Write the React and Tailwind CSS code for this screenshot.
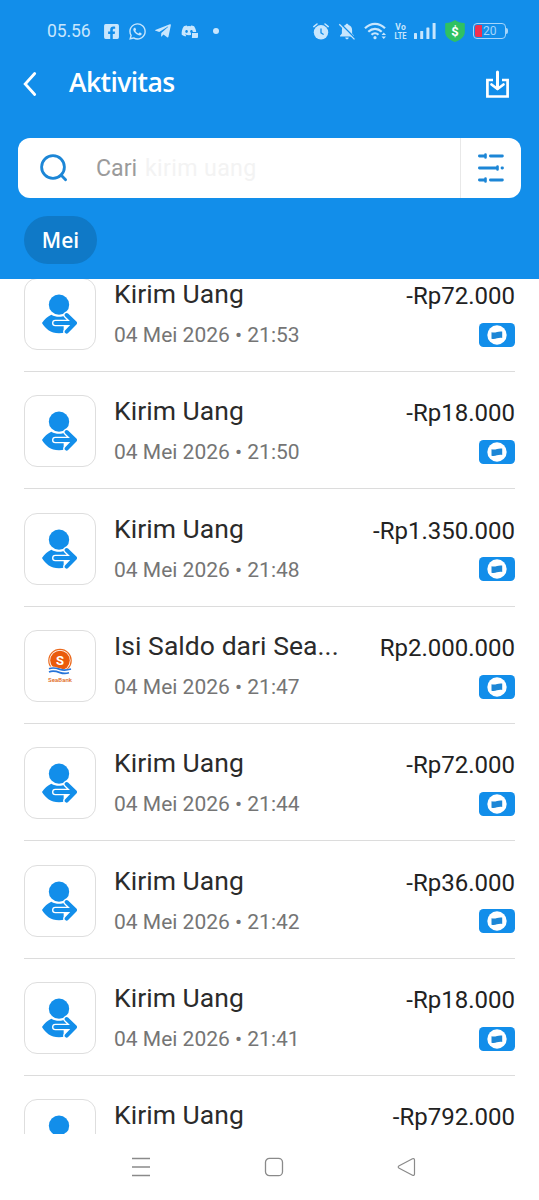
import { FaFacebookSquare, FaTelegramPlane, FaWhatsapp, FaDiscord } from 'react-icons/fa'

const transactions = [
  { id: 1, title: 'Kirim Uang', date: '04 Mei 2026 • 21:53', amount: '-Rp72.000' },
  { id: 2, title: 'Kirim Uang', date: '04 Mei 2026 • 21:50', amount: '-Rp18.000' },
  { id: 3, title: 'Kirim Uang', date: '04 Mei 2026 • 21:48', amount: '-Rp1.350.000' },
  { id: 4, title: 'Isi Saldo dari Sea...', date: '04 Mei 2026 • 21:47', amount: 'Rp2.000.000', bank: true },
  { id: 5, title: 'Kirim Uang', date: '04 Mei 2026 • 21:44', amount: '-Rp72.000' },
  { id: 6, title: 'Kirim Uang', date: '04 Mei 2026 • 21:42', amount: '-Rp36.000' },
  { id: 7, title: 'Kirim Uang', date: '04 Mei 2026 • 21:41', amount: '-Rp18.000' },
  { id: 8, title: 'Kirim Uang', amount: '-Rp792.000' },
]

function StatusBar() {
  return (
    <div className="flex h-[62px] items-center pl-[47px] pr-[31px] text-[#c8e6fd]">
      <span className="mt-px w-[57px] text-[17.5px] leading-none tracking-[-0.1px]">05.56</span>
      <FaFacebookSquare className="-ml-px size-[17px]" />
      <FaWhatsapp className="ml-[8px] size-[19px]" />
      <FaTelegramPlane className="ml-[7px] size-[18px]" />
      <div className="relative ml-[9px] h-[14px] w-[16px]">
        <FaDiscord className="-mt-px size-[16px]" />
        <span className="absolute -right-px bottom-0 h-[6px] w-[7px] rounded-[1px] border-l border-t border-[#128eea] bg-[#c8e6fd]" />
      </div>
      <span className="ml-[16px] size-[6px] rounded-full bg-[#c8e6fd]" />

      <div className="ml-auto flex items-center">
        {/* alarm */}
        <svg className="h-[17px] w-[16px]" viewBox="0 0 16 17" fill="none">
          <circle cx="8" cy="9.3" r="7.2" fill="currentColor" />
          <path d="M.8 3.6 4 1M15.2 3.6 12 1" stroke="currentColor" strokeWidth="1.5" strokeLinecap="round" />
          <path d="M8 6v3.8l2.2 1.4" stroke="#128eea" strokeWidth="1.3" strokeLinecap="round" />
        </svg>
        {/* muted bell */}
        <svg className="ml-[9px] h-[17px] w-[18px]" viewBox="0 0 18 17">
          <path d="M9 .8c.9 0 1.4.6 1.5 1.3 2.3.7 3.6 2.6 3.6 4.9v3.6l1.9 2.2v.7H2v-.7l1.9-2.2V7c0-2.3 1.3-4.2 3.6-4.9C7.6 1.4 8.1.8 9 .8ZM7.2 14.5h3.6c-.2 1.2-.9 1.8-1.8 1.8s-1.6-.6-1.8-1.8Z" fill="currentColor" />
          <path d="M2.6.8 17.4 15.6" stroke="#128eea" strokeWidth="1.6" />
          <path d="M1.3 1.2 16.5 16.4" stroke="currentColor" strokeWidth="1.3" />
        </svg>
        {/* wifi */}
        <svg className="ml-[8px] h-[18px] w-[23px]" viewBox="0 0 23 18" fill="none" stroke="currentColor" strokeWidth="2.2">
          <path d="M1 6.3C7 .3 15 .3 21 6.3" />
          <path d="M4.3 9.7c4-3.8 9.4-3.8 13.4 0" />
          <path d="M7.5 12.8c2-2 5-2 7 0" />
          <circle cx="11" cy="15.7" r="1.6" fill="currentColor" stroke="none" />
          <path d="m17.5 13 2.25-2.5L22 13ZM17.5 14.5h4.5L19.75 17Z" fill="currentColor" stroke="none" />
        </svg>
        <svg className="ml-[7px] h-[17px] w-[13px]" viewBox="0 0 13 17" fill="currentColor" fontWeight="700" fontSize="8.5">
          <text x="6.5" y="7.2" textAnchor="middle" textLength="10.5">Vo</text>
          <text x="6.5" y="15.5" textAnchor="middle" textLength="12" lengthAdjust="spacingAndGlyphs">LTE</text>
        </svg>
        {/* signal */}
        <svg className="ml-[7px] h-[16px] w-[22px]" viewBox="0 0 22 16" fill="currentColor">
          <rect x="0" y="10" width="3" height="6" rx=".6" />
          <rect x="6.2" y="8" width="3" height="8" rx=".6" />
          <rect x="12.4" y="4.5" width="3" height="11.5" rx=".6" />
          <rect x="18.6" y="0" width="3" height="16" rx=".6" />
        </svg>
        {/* security shield */}
        <svg className="ml-[9px] h-[22px] w-[20px]" viewBox="0 0 20 22">
          <path d="M10 0c2.6 1.9 5.5 2.9 9 3.1.5 0 .8.4.8.9v8c0 4.8-4.2 8-9.8 10C4.4 20 .2 16.8.2 12V4c0-.5.3-.9.8-.9C4.5 2.9 7.4 1.9 10 0Z" fill="#2fc162" />
          <text x="10" y="15.5" textAnchor="middle" fontSize="13" fontWeight="700" fill="#fff">$</text>
        </svg>
        {/* battery */}
        <div className="ml-[8px] flex items-center">
          <div className="flex h-[16px] w-[33px] items-center rounded-[4px] border border-[#a6d5fa] p-px">
            <span className="h-full w-[7px] rounded-l-[2px] bg-[#f0304f]" />
            <span className="ml-px text-[12px] leading-none text-[#a6d5fa]">20</span>
          </div>
          <span className="h-[6px] w-[2px] rounded-r-sm bg-[#a6d5fa]" />
        </div>
      </div>
    </div>
  )
}

function Header() {
  return (
    <header className="h-[279px] shrink-0 bg-[#128eea]">
      <StatusBar />
      <div className="flex h-[44px] items-center pl-[23px] pr-[29px] text-white">
        <svg className="h-[26px] w-[14px]" viewBox="0 0 14 26" fill="none" stroke="currentColor" strokeWidth="2.8" strokeLinecap="round">
          <path d="M11.7 2.5 2.2 13l9.5 10.5" />
        </svg>
        <h1 className="-mt-[3px] ml-[32px] font-['Open_Sans'] text-[26.5px] font-semibold leading-none tracking-[-0.6px]">Aktivitas</h1>
        <svg className="ml-auto h-[29px] w-[25px]" viewBox="0 0 25 29" fill="none" stroke="currentColor" strokeWidth="2.7">
          <path d="M8 10H2.4v16.500h20.200V10H17" />
          <path d="M12.5 2v16" strokeLinecap="round" strokeWidth="3" />
          <path d="m6.500 14.500 6 4.500 6-4.500" strokeLinecap="round" strokeLinejoin="round" />
        </svg>
      </div>

      <div className="mx-[18px] mt-[32px] flex h-[60px] rounded-[12px] bg-white">
        <div className="flex flex-1 items-center pl-[21px]">
          <svg className="size-[30px]" viewBox="0 0 30 30" fill="none" stroke="#1c86d6" strokeWidth="2.8" strokeLinecap="round">
            <circle cx="14" cy="14" r="11.4" />
            <path d="m22 22 4.600 4.800" />
          </svg>
          <p className="ml-[27px] mt-[2px] whitespace-pre text-[23.2px] leading-none text-[#9b9b9b]">
            Cari <span className="ml-[2px] tracking-[0.35px] text-[#f3f3f3]">kirim uang</span>
          </p>
        </div>
        <div className="flex w-[61px] items-center justify-center border-l border-[#e8e8e8]">
          <svg className="h-[32px] w-[28px]" viewBox="0 0 28 32" fill="none" stroke="#1c86d6" strokeWidth="2.8" strokeLinecap="round">
            <path d="M2.400 4h5M13.400 4h12M2.400 16h17M25 16h.5M2.400 28h5M13.400 28h12" />
            <path d="M8.500 2.500v3M20.500 14.500v3M8.500 26.500v3" strokeWidth="2.600" />
          </svg>
        </div>
      </div>

      <button className="ml-[24px] mt-[18px] flex h-[48px] w-[73px] items-center justify-center rounded-full bg-[#0f79c7] pt-px font-['Open_Sans'] text-[21px] font-semibold text-white">
        Mei
      </button>
    </header>
  )
}

function SendIcon() {
  return (
    <svg className="-ml-[2px] h-[40px] w-[36px]" viewBox="0 0 108 120" fill="none">
      <path d="M3 87C11 75 20 67 31 62c14 8 32 8 46 0l8 5 20 20c-10 14-22 31-51 31C29 118 12 103 3 87Z" fill="#128eea" />
      <path d="M68 90h42v30H68Z" fill="#fff" />
      <circle cx="54" cy="32" r="30.5" fill="#128eea" />
      <path d="M43 87h58M77 63l25 24-25 26" stroke="#fff" strokeWidth="20" strokeLinecap="round" strokeLinejoin="round" />
      <path d="M43 87h58M77 63l25 24-25 26" stroke="#128eea" strokeWidth="12" strokeLinecap="round" strokeLinejoin="round" />
    </svg>
  )
}

function SeaBankIcon() {
  return (
    <svg className="h-[36px] w-[30px]" viewBox="0 0 30 36">
      <circle cx="15" cy="12.500" r="11.200" fill="#fff" stroke="#ec6a1e" strokeWidth="1.200" />
      <circle cx="15" cy="12.500" r="9.800" fill="#ea5b0c" />
      <path d="M2 19.500c5-2 8-1 13 .8 4 1.400 7 1 12-.3v7H2Z" fill="#fff" />
      <path d="M4 20.800c4-1.800 7-.8 11 .6 4 1.300 7 .8 11-.4M4 24c4-1.800 7-.8 11 .6 3.500 1.200 6 1 9 .2" fill="none" stroke="#2674d9" strokeWidth="1.700" />
      <text x="15" y="17" textAnchor="middle" fontSize="13" fontWeight="700" fill="#fff">S</text>
      <text x="15" y="33.500" textAnchor="middle" fontSize="6" fontWeight="600" textLength="24" fill="#e2702c">SeaBank</text>
    </svg>
  )
}

function WalletBadge() {
  return (
    <svg className="h-[24px] w-[36px]" viewBox="0 0 36 24">
      <rect width="36" height="24" rx="4.500" fill="#128eea" />
      <circle cx="18" cy="12" r="9.700" fill="#fff" />
      <path d="M12.500 9.200c4 1.300 6.500-1.500 10.700-.6v6.400c-4.200-.9-6.700 1.900-10.700.7Z" fill="#1c86d6" />
    </svg>
  )
}

function TransactionRow({ item }) {
  return (
    <li className="flex h-[117.35px] shrink-0 border-b border-[#dcdcdc] pt-[23.5px]">
      <div className="flex size-[72px] shrink-0 items-center justify-center rounded-[13px] border border-[#dedede]">
        {item.bank ? <SeaBankIcon /> : <SendIcon />}
      </div>
      <div className="ml-[18px] flex-1">
        <p className="whitespace-nowrap text-[26.5px] leading-[32px] tracking-[0.05px] text-[#2b2b2b]">{item.title}</p>
        {item.date && (
          <p className="mt-[12px] whitespace-nowrap text-[21px] leading-[26px] text-[#757575]">{item.date}</p>
        )}
      </div>
      <div className="flex flex-col items-end">
        <p className="mt-[2px] whitespace-nowrap text-[24px] leading-[32px] text-[#222]">{item.amount}</p>
        <div className="mt-[10.5px]">
          <WalletBadge />
        </div>
      </div>
    </li>
  )
}

function NavBar() {
  return (
    <nav className="flex h-[66px] shrink-0 items-center justify-between pl-[131px] pr-[123px] text-[#8a8a8a]">
      <svg className="size-[20px]" viewBox="0 0 20 20" stroke="currentColor" strokeWidth="1.4">
        <path d="M1 1.500h18M1 10h18M1 18.500h18" />
      </svg>
      <svg className="size-[20px]" viewBox="0 0 20 20" fill="none" stroke="currentColor" strokeWidth="1.3">
        <rect x="1.500" y="1.300" width="17" height="17.400" rx="4" />
      </svg>
      <svg className="size-[20px]" viewBox="0 0 20 20" fill="none" stroke="currentColor" strokeWidth="1.2">
        <path d="M18.500 3v14c0 1.300-.8 1.800-2 1.200L3.200 11.300c-1.300-.7-1.300-1.900 0-2.600L16.500 1.800c1.200-.6 2-.1 2 1.200Z" />
      </svg>
    </nav>
  )
}

export default function App() {
  return (
    <div className="flex h-[1200px] w-[539px] flex-col overflow-hidden bg-white font-[Roboto,sans-serif]">
      <Header />
      <main className="h-[855px] shrink-0 overflow-hidden px-[24px]">
        <ul className="-mt-[24.5px] flex flex-col">
          {transactions.map((item) => (
            <TransactionRow key={item.id} item={item} />
          ))}
        </ul>
      </main>
      <NavBar />
    </div>
  )
}
